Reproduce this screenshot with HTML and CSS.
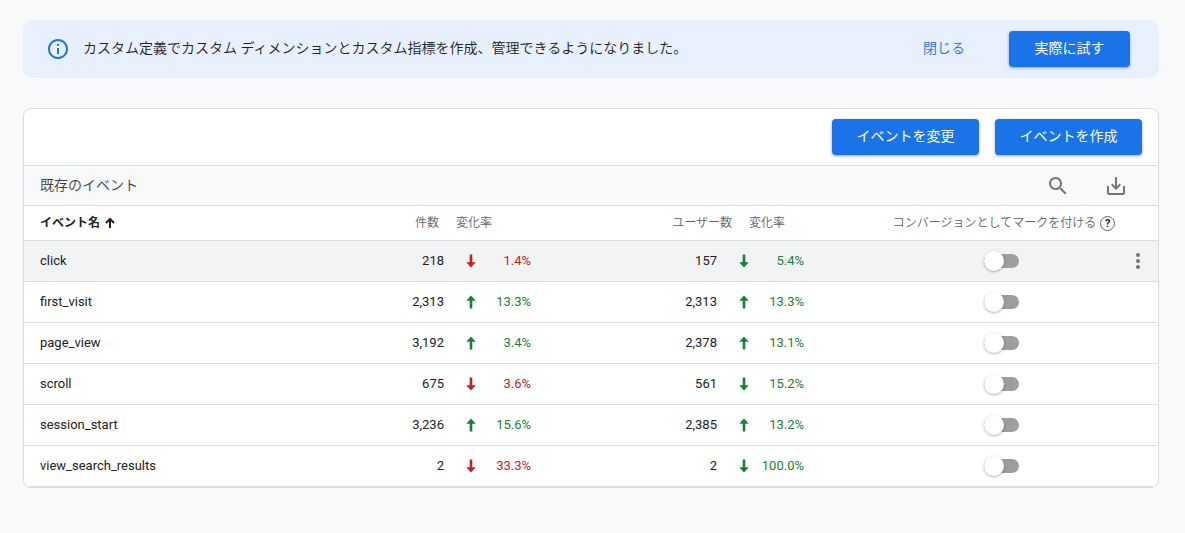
FILE: index.html
```html
<!DOCTYPE html>
<html lang="ja">
<head>
<meta charset="utf-8">
<meta name="viewport" content="width=device-width, initial-scale=1">
<title>イベント</title>
<link rel="stylesheet" href="styles.css">
</head>
<body>
<svg class="sprite" aria-hidden="true">
  <symbol id="arrow-up" viewBox="0 0 12 14"><path d="M6 .5 L10.700 5.700 H7.300 V13.500 H4.700 V5.700 H1.300 Z"/></symbol>
  <symbol id="arrow-down" viewBox="0 0 12 14"><path d="M6 13.500 L1.300 8.300 H4.700 V.5 H7.300 V8.300 H10.700 Z"/></symbol>
</svg>
<main class="page">
  <section class="banner">
    <svg class="banner-icon" viewBox="0 0 24 24" aria-hidden="true"><path d="M11 7h2v2h-2zm0 4h2v6h-2zm1-9C6.480 2 2 6.480 2 12s4.480 10 10 10 10-4.480 10-10S17.520 2 12 2zm0 18c-4.410 0-8-3.590-8-8s3.590-8 8-8 8 3.590 8 8-3.590 8-8 8z"/></svg>
    <p class="banner-text">カスタム定義でカスタム ディメンションとカスタム指標を作成、管理できるようになりました。</p>
    <button class="text-button" type="button">閉じる</button>
    <button class="button" type="button">実際に試す</button>
  </section>

  <section class="card">
    <div class="actions">
      <button class="button wide" type="button">イベントを変更</button>
      <button class="button wide" type="button">イベントを作成</button>
    </div>
    <header class="title-bar">
      <h2 class="title">既存のイベント</h2>
      <button class="icon-button" type="button" aria-label="検索"><svg viewBox="0 0 24 24"><path d="M15.500 14h-.790l-.280-.270C15.410 12.590 16 11.110 16 9.500 16 5.910 13.090 3 9.500 3S3 5.910 3 9.500 5.910 16 9.500 16c1.610 0 3.090-.590 4.230-1.570l.270.280v.790l5 4.990L20.490 19l-4.990-5zm-6 0C7.010 14 5 11.990 5 9.500S7.010 5 9.500 5 14 7.010 14 9.500 11.990 14 9.500 14z"/></svg></button>
      <button class="icon-button" type="button" aria-label="ダウンロード"><svg viewBox="0 0 24 24"><path d="M11 3h2v9.200l2.600-2.600L17 11l-5 5-5-5 1.400-1.400 2.600 2.600zM3 12h2v7h14v-7h2v7a2 2 0 0 1-2 2H5a2 2 0 0 1-2-2z"/></svg></button>
    </header>
    <table class="events">
      <colgroup>
        <col><col class="col-count"><col class="col-change"><col class="col-users"><col class="col-change-users"><col class="col-mark"><col class="col-menu">
      </colgroup>
      <thead>
        <tr>
          <th class="name sorted" scope="col"><span class="sort-label">イベント名<svg class="sort-icon" viewBox="0 0 12 12" aria-hidden="true"><path d="M6 11V2M2 6l4-4 4 4"/></svg></span></th>
          <th class="count" scope="col">件数</th>
          <th class="change" scope="col">変化率</th>
          <th class="users" scope="col">ユーザー数</th>
          <th class="change-users" scope="col">変化率</th>
          <th class="mark" scope="col"><span class="mark-label">コンバージョンとしてマークを付ける<button class="help" type="button" aria-label="ヘルプ">?</button></span></th>
          <th class="menu"></th>
        </tr>
      </thead>
      <tbody>
        <tr class="active">
          <td class="name">click</td><td class="count">218</td>
          <td class="change"><span class="delta bad"><svg class="arrow"><use href="#arrow-down"/></svg>1.4%</span></td>
          <td class="users">157</td>
          <td class="change-users"><span class="delta good"><svg class="arrow"><use href="#arrow-down"/></svg>5.4%</span></td>
          <td class="mark"><input class="switch" type="checkbox" aria-label="click"></td>
          <td class="menu"><button class="more" type="button" aria-label="その他"><svg viewBox="0 0 4 16"><circle cx="2" cy="2" r="2"/><circle cx="2" cy="8" r="2"/><circle cx="2" cy="14" r="2"/></svg></button></td>
        </tr>
        <tr>
          <td class="name">first_visit</td><td class="count">2,313</td>
          <td class="change"><span class="delta good"><svg class="arrow"><use href="#arrow-up"/></svg>13.3%</span></td>
          <td class="users">2,313</td>
          <td class="change-users"><span class="delta good"><svg class="arrow"><use href="#arrow-up"/></svg>13.3%</span></td>
          <td class="mark"><input class="switch" type="checkbox" aria-label="first_visit"></td><td class="menu"></td>
        </tr>
        <tr>
          <td class="name">page_view</td><td class="count">3,192</td>
          <td class="change"><span class="delta good"><svg class="arrow"><use href="#arrow-up"/></svg>3.4%</span></td>
          <td class="users">2,378</td>
          <td class="change-users"><span class="delta good"><svg class="arrow"><use href="#arrow-up"/></svg>13.1%</span></td>
          <td class="mark"><input class="switch" type="checkbox" aria-label="page_view"></td><td class="menu"></td>
        </tr>
        <tr>
          <td class="name">scroll</td><td class="count">675</td>
          <td class="change"><span class="delta bad"><svg class="arrow"><use href="#arrow-down"/></svg>3.6%</span></td>
          <td class="users">561</td>
          <td class="change-users"><span class="delta good"><svg class="arrow"><use href="#arrow-down"/></svg>15.2%</span></td>
          <td class="mark"><input class="switch" type="checkbox" aria-label="scroll"></td><td class="menu"></td>
        </tr>
        <tr>
          <td class="name">session_start</td><td class="count">3,236</td>
          <td class="change"><span class="delta good"><svg class="arrow"><use href="#arrow-up"/></svg>15.6%</span></td>
          <td class="users">2,385</td>
          <td class="change-users"><span class="delta good"><svg class="arrow"><use href="#arrow-up"/></svg>13.2%</span></td>
          <td class="mark"><input class="switch" type="checkbox" aria-label="session_start"></td><td class="menu"></td>
        </tr>
        <tr>
          <td class="name">view_search_results</td><td class="count">2</td>
          <td class="change"><span class="delta bad"><svg class="arrow"><use href="#arrow-down"/></svg>33.3%</span></td>
          <td class="users">2</td>
          <td class="change-users"><span class="delta good"><svg class="arrow"><use href="#arrow-down"/></svg>100.0%</span></td>
          <td class="mark"><input class="switch" type="checkbox" aria-label="view_search_results"></td><td class="menu"></td>
        </tr>
      </tbody>
    </table>
  </section>
</main>
</body>
</html>
```
FILE: styles.css
```css
* { box-sizing: border-box; }

body {
  margin: 0;
  background: #f8f9fb;
  color: #202124;
  font-family: Roboto, "Noto Sans CJK JP", sans-serif;
  font-size: 14px;
  line-height: 20px;
}

button { font: inherit; cursor: pointer; }

.sprite { display: none; }

.page {
  display: flex;
  flex-direction: column;
  gap: 30px;
  padding: 20px 26px 44px 23px;
}

.banner {
  display: flex;
  align-items: center;
  padding: 11px 29px 11px 23px;
  border-radius: 10px;
  background: #e8f0fe;
}

.banner-icon { width: 24px; height: 24px; margin-right: 13px; fill: #1a73e8; }
.banner-text { flex: 1; margin: 0; padding-bottom: 2px; font-weight: 350; }

.text-button {
  margin-right: 36px;
  padding: 7px 8px 9px;
  border: 0;
  background: none;
  color: #1a73e8;
  font-weight: 350;
}

.button {
  min-width: 121px;
  height: 36px;
  padding: 0 24px 2px;
  border: 0;
  border-radius: 4px;
  background: #1a73e8;
  color: #fff;
  box-shadow: 0 1px 2px rgba(60, 64, 67, .3), 0 1px 3px 1px rgba(60, 64, 67, .15);
}

.wide { min-width: 147px; }

.card {
  overflow: hidden;
  border: 1px solid #dadce0;
  border-radius: 8px;
  background: #fff;
}

.actions {
  display: flex;
  justify-content: flex-end;
  gap: 16px;
  padding: 10px 16px;
}

.title-bar {
  display: flex;
  align-items: center;
  gap: 34px;
  height: 41px;
  padding: 0 30px 0 16px;
  border: solid #dadce0;
  border-width: 1px 0;
  background: #f8f9fb;
}

.title {
  flex: 1;
  margin: 0;
  padding-bottom: 2px;
  color: #3c4043;
  font-size: 14px;
  font-weight: 350;
}

.icon-button { width: 24px; height: 24px; padding: 0; border: 0; background: none; }
.icon-button svg { display: block; fill: #757575; }

.events {
  width: 100%;
  border-collapse: separate;
  border-spacing: 0;
  table-layout: fixed;
  font-size: 13px;
}

.col-count { width: 80px; }
.col-change { width: 95px; }
.col-users { width: 194px; }
.col-change-users { width: 153px; }
.col-mark { width: 234px; }
.col-menu { width: 38px; }

.events th, .events td {
  padding: 0;
  border-bottom: 1px solid #dadce0;
  text-align: left;
  white-space: nowrap;
}

.events th { height: 35px; color: #5f6368; font-size: 12px; font-weight: 350; }
.events td { height: 41px; }
.events .name { padding-left: 16px; }
.events .sorted { color: #202124; font-weight: 700; }
.events .count, .events .users { text-align: right; }
.events th.count { padding-right: 5px; }
.events th.change { padding-left: 12px; }
.events td.change { padding-left: 21px; }
.events th.users { padding-right: 1px; }
.events td.users { padding-right: 16px; }
.events th.change-users { padding-left: 16px; }
.events td.change-users { padding-left: 5px; }
.events .mark { text-align: center; }
.events th.mark { padding-left: 2px; }
.events td.mark { padding-right: 4px; }
.active { background: #f1f3f4; }

.sort-label, .mark-label { display: inline-flex; align-items: center; gap: 4px; }
.sort-icon { width: 12px; height: 12px; fill: none; stroke: #202124; stroke-width: 2; }

.help {
  width: 15px;
  height: 15px;
  padding: 0;
  border: 1px solid #5f6368;
  border-radius: 50%;
  background: none;
  color: #202124;
  font-size: 11px;
  font-weight: 700;
  line-height: 13px;
}

.delta {
  display: flex;
  align-items: center;
  justify-content: space-between;
  width: 66px;
}

.arrow { width: 12px; height: 14px; fill: currentColor; }
.good { color: #188038; }
.bad { color: #c5221f; }

.switch {
  display: flex;
  align-items: center;
  width: 35px;
  height: 14px;
  margin: 0 auto;
  border-radius: 7px;
  appearance: none;
  background: #9e9e9e;
}

.switch::before {
  content: "";
  flex: none;
  width: 20px;
  height: 20px;
  border-radius: 50%;
  background: #fff;
  box-shadow: 0 1px 3px rgba(0, 0, 0, .3);
}

.switch:checked { justify-content: flex-end; background: #8ab4f8; }

.more { display: block; width: 24px; height: 24px; margin-left: 6px; padding: 4px 10px; border: 0; background: none; }
.more svg { display: block; width: 4px; height: 16px; fill: #757575; }
```
